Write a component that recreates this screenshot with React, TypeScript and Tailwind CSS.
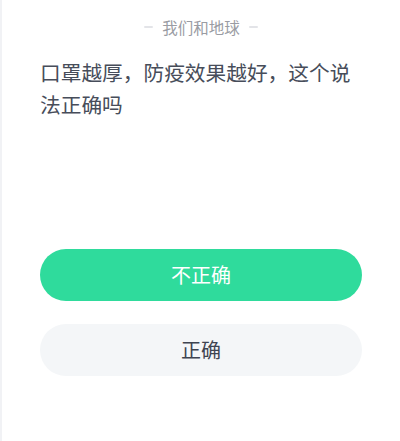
export default function App() {
  return (
    <div
      className="relative h-[441px] w-full overflow-hidden bg-white border-l-2 border-[#f1f2f5]"
      style={{ fontFamily: '"Noto Sans CJK SC", "Noto Sans", sans-serif' }}
    >
      <div className="flex flex-col pl-[38px] pr-[38px]">
        <div className="mt-[17px] flex items-center justify-center gap-[9px] h-[20px]">
          <span className="block h-[2px] w-[9px] rounded-full bg-[#e3e4e8]" />
          <span className="text-[15.5px] leading-[20px] text-[#9a9ca3]">我们和地球</span>
          <span className="block h-[2px] w-[9px] rounded-full bg-[#e3e4e8]" />
        </div>

        <p className="mt-[19px] text-[20.7px] leading-[32px] text-[#474d5a]">
          口罩越厚，防疫效果越好，这个说法正确吗
        </p>

        <div className="mt-[129px] flex flex-col gap-[23px]">
          <button className="h-[52px] w-full rounded-full bg-[#2fdb9c] text-[20px] text-white">
            不正确
          </button>
          <button className="h-[52px] w-full rounded-full bg-[#f4f6f8] text-[20px] text-[#3e4451]">
            正确
          </button>
        </div>
      </div>
    </div>
  );
}
